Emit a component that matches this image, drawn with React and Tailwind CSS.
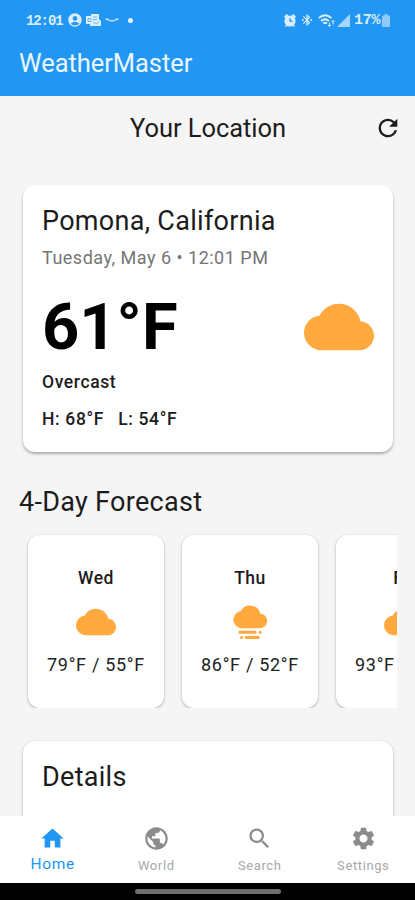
import React, { useState } from "react";
import {
  MdAccountCircle,
  MdBluetoothConnected,
  MdCloud,
  MdHome,
  MdPublic,
  MdRefresh,
  MdSearch,
  MdSettings,
} from "react-icons/md";

const forecast = [
  { day: "Wed", icon: "cloud", high: 79, low: 55 },
  { day: "Thu", icon: "fog", high: 86, low: 52 },
  { day: "Fri", icon: "cloud", high: 93, low: 57 },
];

const tabs = [
  { id: "home", label: "Home", Icon: MdHome },
  { id: "world", label: "World", Icon: MdPublic },
  { id: "search", label: "Search", Icon: MdSearch },
  { id: "settings", label: "Settings", Icon: MdSettings },
];

const FogIcon = () => (
  <svg width="34" height="34" viewBox="0 0 34 34" fill="currentColor">
    <path d="M27.3 8.6A10.6 10.6 0 0 0 7.7 6.1 8.6 8.6 0 0 0 8.6 23.2h17.9a7.3 7.3 0 0 0 .8-14.6z" />
    <rect x="5.5" y="25.8" width="18" height="3" rx="1" />
    <rect x="25.5" y="25.8" width="3.2" height="3" rx="1.5" />
    <rect x="7" y="31" width="3.2" height="3" rx="1.5" />
    <rect x="12" y="31" width="14.5" height="3" rx="1" />
  </svg>
);

const StatusBar = () => (
  <div className="flex h-10 items-center justify-between pl-[26px] pr-[25px] text-[#d9edfd]">
    <div className="flex items-center">
      <span className="w-[37px] pt-[2px] font-['Liberation_Mono','Courier_New',monospace] text-[14px] font-bold tracking-[-1.1px]">
        12:01
      </span>
      <MdAccountCircle size={16} className="ml-1" />
      <svg width="15" height="14" viewBox="0 0 15 14" className="ml-[3px]" fill="currentColor">
        <path d="M5 1h8v5l2 2v5H4v-2H0V3h5z" />
        <path d="M2 5.5h3v3H2zM7 4h4M7 6.5h4M7 9l3 2 3-2" fill="none" stroke="#5fb2f7" strokeWidth="0.9" />
      </svg>
      <svg width="14" height="6" viewBox="0 0 14 6" className="ml-1" fill="none" stroke="currentColor" strokeWidth="1.3">
        <path d="M.5 2C3.5 2 4 4 7 4s3.5-2 6.5-2" />
      </svg>
      <span className="ml-[9px] size-[5px] rounded-full bg-[#e6f4ff]" />
    </div>
    <div className="flex items-center">
      <svg width="12" height="13" viewBox="0 0 12 13" fill="currentColor">
        <circle cx="6" cy="7" r="5.6" />
        <path d="M0 2.6L2.700 0l1.800 1.600L1.300 4.200zM12 2.600L9.300 0 7.500 1.600l3.200 2.600zM1 13l1-2.500 2 1.500zM11 13l-1-2.500-2 1.500z" />
        <path d="M6 4v3.200h2.500" fill="none" stroke="#2196f3" strokeWidth="1.200" />
      </svg>
      <MdBluetoothConnected size={14} className="ml-[4px]" />
      <svg width="17" height="13" viewBox="0 0 17 13" className="ml-[4px]" fill="none" stroke="currentColor" strokeWidth="1.700">
        <path d="M.8 4Q7 -1.500 13.500 4M3 7Q7 3.500 11 7M5.300 9.500Q7 8 9 9.500" />
        <path d="M11.500 8.500v4M15 6.500v4M10 11l1.500 1.500L13 11M13.600 8L15 6.500 16.500 8" strokeWidth="1" />
      </svg>
      <svg width="13" height="13" viewBox="0 0 13 13" className="ml-[2px]">
        <path d="M13 0v13H0z" fill="#a6d5fa" />
      </svg>
      <span className="ml-1 w-[26px] pt-[3px] font-['Liberation_Mono','Courier_New',monospace] text-[15px] font-bold tracking-[-0.3px]">
        17%
      </span>
      <svg width="8" height="13" viewBox="0 0 8 13" className="ml-[2px]">
        <path d="M2.500 0h3v1.500H7a1 1 0 0 1 1 1V12a1 1 0 0 1-1 1H1a1 1 0 0 1-1-1V2.500a1 1 0 0 1 1-1h1.500z" fill="#90caf9" />
      </svg>
    </div>
  </div>
);

const ForecastCard = ({ day, icon, high, low }) => (
  <div className="flex h-[173px] w-[136px] shrink-0 flex-col items-center rounded-xl bg-white pt-8 shadow-[0_1px_3px_rgba(0,0,0,0.3)]">
    <div className="text-[17.5px] leading-[22px] font-medium tracking-[0.5px] text-[#1c1c1c]">{day}</div>
    <div className="mt-[13px] flex h-10 items-center justify-center text-[#ffa93f]">
      {icon === "fog" ? <FogIcon /> : <MdCloud size={40} />}
    </div>
    <div className="mt-[12px] text-[18px] leading-[22px] tracking-[0.7px] whitespace-nowrap text-[#222]">
      {high}°F / {low}°F
    </div>
  </div>
);

export default function App() {
  const [activeTab, setActiveTab] = useState("home");

  return (
    <div className="flex h-[900px] w-[415px] flex-col overflow-hidden bg-[#f5f5f5] font-[Roboto,sans-serif] text-[#1c1c1c]">
      <header className="h-24 shrink-0 bg-[#2196f3]">
        <StatusBar />
        <h1 className="pl-[19px] text-[25.5px] leading-[46px] tracking-[-0.05px] text-[#eaf6ff]">WeatherMaster</h1>
      </header>

      <main className="min-h-0 flex-1 overflow-hidden">
        <div className="flex h-16 items-center justify-between">
          <span className="w-[42px]" />
          <h2 className="text-[25.5px] leading-8 tracking-[-0.05px]">Your Location</h2>
          <button type="button" className="w-[41px]" aria-label="Refresh">
            <MdRefresh size={28} />
          </button>
        </div>

        <section className="mt-[25px] ml-[23px] h-[267px] w-[370px] rounded-xl bg-white px-[19px] pt-5 shadow-[0_2px_3px_rgba(0,0,0,0.3)]">
          <h3 className="text-[27px] leading-8 tracking-[0.3px]">Pomona, California</h3>
          <p className="mt-[9px] text-[18px] leading-6 tracking-[0.5px] text-[#757575]">
            Tuesday, May 6 • 12:01 PM
          </p>
          <div className="mt-[18px] flex h-[78px] items-center justify-between">
            <span className="text-[65px] leading-[78px] font-bold text-black">61°F</span>
            <MdCloud size={70} className="text-[#ffa93f]" />
          </div>
          <p className="mt-1 text-[17.5px] leading-6 font-medium tracking-[0.6px]">Overcast</p>
          <p className="mt-[13px] flex gap-[14px] text-[17.5px] leading-6 font-medium tracking-[0.65px]">
            <span>H: 68°F</span>
            <span>L: 54°F</span>
          </p>
        </section>

        <h2 className="mt-[34px] pt-px pl-[19px] text-[27px] leading-[31px] tracking-[0.3px]">4-Day Forecast</h2>
        <div className="mt-[13px] mr-[18px] ml-[18px] flex h-[177px] gap-[18px] overflow-hidden pt-[4px] pl-[10px]">
          {forecast.map((item) => (
            <ForecastCard key={item.day} {...item} />
          ))}
        </div>

        <section className="mt-[33px] ml-[23px] h-[200px] w-[370px] rounded-xl bg-white px-[19px] pt-5 shadow-[0_1px_3px_rgba(0,0,0,0.3)]">
          <h3 className="text-[27px] leading-8 tracking-[0.3px]">Details</h3>
        </section>
      </main>

      <nav className="flex h-[67px] shrink-0 bg-white pl-px">
        {tabs.map(({ id, label, Icon }) => (
          <button
            key={id}
            type="button"
            onClick={() => setActiveTab(id)}
            className={`flex flex-1 flex-col items-center pt-[9px] ${
              activeTab === id ? "text-[#2196f3]" : "text-[#8c8c8c]"
            }`}
          >
            <Icon size={27} />
            <span
              className={
                activeTab === id
                  ? "mt-[2px] text-[15.5px] leading-5 tracking-[0.7px]"
                  : "mt-[4px] text-[13px] leading-5 tracking-[0.6px] text-[#a8a8a8]"
              }
            >
              {label}
            </span>
          </button>
        ))}
      </nav>
      <div className="flex h-[17px] shrink-0 items-center justify-center bg-black">
        <div className="h-[5px] w-[146px] rounded-full bg-[#6e6e6e]" />
      </div>
    </div>
  );
}
